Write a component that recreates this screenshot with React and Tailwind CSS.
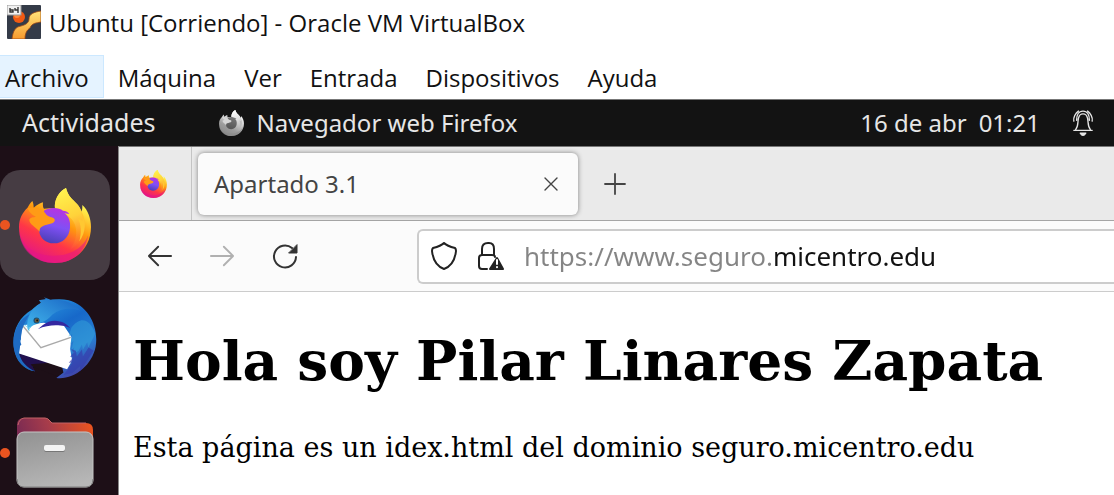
import React from "react";

function Firefox({ className, mono = false, id }) {
  const stops = mono
    ? ["#f5f5f5", "#c9c9c9", "#9c9c9c", "#8a8a8a"]
    : ["#fff44f", "#ff980e", "#ff3647", "#e31587"];
  return (
    <svg viewBox="0 0 216 225" className={className} aria-hidden="true">
      <defs>
        <linearGradient id={id + "a"} x1="0.75" y1="0.1" x2="0.3" y2="0.98">
          <stop offset="0.08" stopColor={stops[0]} />
          <stop offset="0.4" stopColor={stops[1]} />
          <stop offset="0.68" stopColor={stops[2]} />
          <stop offset="1" stopColor={stops[3]} />
        </linearGradient>
        <linearGradient id={id + "b"} x1="0.6" y1="0" x2="0.35" y2="1">
          <stop offset="0" stopColor={mono ? "#777" : "#b833e1"} />
          <stop offset="0.5" stopColor={mono ? "#666" : "#8050f5"} />
          <stop offset="1" stopColor={mono ? "#555" : "#4a3fb5"} />
        </linearGradient>
        <linearGradient id={id + "c"} x1="0.3" y1="0" x2="0.5" y2="1">
          <stop offset="0" stopColor={mono ? "#fff" : "#fff44f"} />
          <stop offset="0.5" stopColor={mono ? "#ddd" : "#ffd23a"} />
          <stop offset="1" stopColor={mono ? "#aaa" : "#ff7139"} stopOpacity="0.1" />
        </linearGradient>
      </defs>
      <path
        d="M40 39C43 44 44 53 44 59C53 51 64 45 72 43C71 52 72 58 75 62C85 60 98 60 108 62C105 34 122 9 141 0C147 25 160 33 174 48C180 55 185 64 187 72C190 66 190 59 190 51C207 66 216 92 216 117C216 180 168 225 108 225C48 225 0 180 0 118C0 91 12 72 25 60C29 53 34 45 40 39Z"
        fill={`url(#${id}a)`}
      />
      <path
        d="M1 131C12 178 51 202 99 203C153 205 195 178 208 140C199 193 160 225 108 225C48 225 4 187 1 131Z"
        fill={mono ? "#888" : "#e31587"}
        opacity="0.55"
      />
      <path
        d="M108 62C104 36 120 10 141 0C147 25 160 33 174 48C190 66 199 91 197 121C194 154 177 174 152 185C169 165 177 137 168 110C158 84 137 78 108 62Z"
        fill={`url(#${id}c)`}
      />
      <path
        d="M75 68C90 58 119 57 132 68C139 68 146 71 151 78L136 76C149 84 155 100 153 119C151 147 131 166 105 166C78 166 59 147 60 122C61 103 83 108 104 100C102 85 88 91 75 81Z"
        fill={`url(#${id}b)`}
      />
      <path
        d="M25 60C39 56 53 60 67 66C78 69 79 83 94 87C103 89 109 92 107 99C104 109 81 108 71 115C63 119 61 124 62 131C50 116 30 108 31 95C32 89 44 87 51 87C38 80 32 73 25 60Z"
        fill={mono ? "#d5d5d5" : "#ff9b16"}
      />
      <path
        d="M187 72C202 98 202 131 181 160C188 133 187 110 176 91C181 91 186 94 190 99C190 88 189 81 187 72Z"
        fill={mono ? "#bbb" : "#ffc832"}
      />
    </svg>
  );
}

function Thunderbird() {
  return (
    <svg viewBox="0 0 250 250" className="size-[84px]" aria-hidden="true">
      <defs>
        <linearGradient id="bird" x1="0.2" y1="0" x2="0.8" y2="1">
          <stop offset="0" stopColor="#2b9ee3" />
          <stop offset="0.4" stopColor="#1768c9" />
          <stop offset="0.7" stopColor="#287fd2" />
          <stop offset="1" stopColor="#4537a0" />
        </linearGradient>
        <linearGradient id="head" x1="0" y1="1" x2="1" y2="0">
          <stop offset="0" stopColor="#43b8ed" />
          <stop offset="1" stopColor="#1762c3" />
        </linearGradient>
      </defs>
      <path d="M56 38C15 60-6 111 3 155C11 195 36 217 66 221L53 205L150 225L129 241C180 248 235 204 246 148C256 88 223 25 166 10C125 0 82 13 56 38Z" fill="url(#bird)" />
      <path d="M18 168L146 207L150 225L131 236L53 205L66 221C40 215 23 197 18 168Z" fill="#1d0f17" />
      <path d="M18 168L110 196L53 200L66 221C40 215 23 197 18 168Z" fill="#21104e" />
      <path d="M28 84L18 168L161 215L176 189L170 155L174 119L150 83L90 77Z" fill="#fff" />
      <path d="M28 84L83 151L172 120" fill="none" stroke="#aaa" strokeWidth="4" />
      <path d="M88 84C120 58 159 75 170 93C156 84 110 78 74 96Z" fill="#3528a1" />
      <path d="M45 100C36 77 48 36 83 17L77 10L98 6L92 1L112 8C150 6 181 18 200 40C168 30 133 35 111 59C91 80 69 77 55 88Z" fill="url(#head)" />
      <path d="M29 81L45 92L54 88L43 105L50 100C47 91 39 83 29 81Z" fill="#81dbef" />
      <path d="M3 155C-4 108 15 67 49 51C35 75 21 103 24 128L17 124L25 141C20 143 18 156 18 168C23 191 42 211 66 221C33 218 8 190 3 155Z" fill="#1e6bc3" />
      <path d="M174 91L165 118L176 111L171 140L180 130L174 158L182 150L178 170L195 161L205 141L208 157L221 135L224 151L245 109C232 72 205 51 174 91Z" fill="#37a8dc" opacity="0.45" />
      <path d="M173 155L180 165L170 178L179 180L166 196L177 195L161 219L150 232L177 226L200 205L199 222L240 160L225 150L208 177L205 156L190 177L187 160Z" fill="#353eae" opacity="0.7" />
      <circle cx="70" cy="70" r="9" fill="#195178" />
      <circle cx="71" cy="70" r="6" fill="#76603e" />
      <circle cx="72" cy="70" r="3" fill="#111" />
    </svg>
  );
}

function Files() {
  return (
    <svg viewBox="0 0 78 72" className="h-[72px] w-[78px]" aria-hidden="true">
      <defs>
        <linearGradient id="back" x1="0" y1="0.5" x2="1" y2="0.3">
          <stop offset="0" stopColor="#772953" />
          <stop offset="0.45" stopColor="#a63c4b" />
          <stop offset="1" stopColor="#e95420" />
        </linearGradient>
        <linearGradient id="front" x1="0.3" y1="0" x2="0.6" y2="1">
          <stop offset="0" stopColor="#949494" />
          <stop offset="1" stopColor="#b7b7b7" />
        </linearGradient>
      </defs>
      <path d="M1 8Q1 1 8 1H29Q32 1 34 4L36 6H70Q77 6 77 13V40H1Z" fill="url(#back)" />
      <path d="M2 8Q3 2 8 1H29Q32 1 34 4L36 6H70" fill="none" stroke="#c16366" strokeWidth="1" />
      <rect x="1" y="15" width="76" height="55" rx="7" fill="url(#front)" stroke="#c4c4c4" />
      <path d="M1 62Q1 70 8 70H70Q77 70 77 62" fill="none" stroke="#777" />
      <rect x="28" y="30" width="21" height="5" rx="2" fill="#777" />
      <rect x="28" y="28" width="21" height="6" rx="2" fill="#f4f4f4" />
    </svg>
  );
}

function VirtualBox() {
  return (
    <svg viewBox="0 0 34 34" className="size-[34px]" aria-hidden="true">
      <defs>
        <linearGradient id="vbox" x1="0" y1="0" x2="0" y2="1">
          <stop offset="0" stopColor="#ffe37a" />
          <stop offset="1" stopColor="#f79a2e" />
        </linearGradient>
      </defs>
      <rect width="34" height="34" rx="1" fill="#343b48" />
      <circle cx="12" cy="12" r="6" fill="#f15a13" />
      <circle cx="10" cy="10" r="3" fill="#ff8a3a" />
      <path d="M34 6C27 7 22 9 22 14C22 18 18 20 14 21C8 22 6 26 5 34H18C18 28 20 25 23 23C25 18 29 18 34 17Z" fill="url(#vbox)" stroke="#9c4614" strokeWidth="0.8" />
      <rect width="14" height="10" fill="#f1f1f1" stroke="#999" />
      <path d="M3 3V7H6V5H3M8 3V5H11M11 2V8" fill="none" stroke="#333" strokeWidth="1.4" />
    </svg>
  );
}

const line = { fill: "none", stroke: "currentColor", strokeLinecap: "round", strokeLinejoin: "round" };
const menus = ["Máquina", "Ver", "Entrada", "Dispositivos", "Ayuda"];

function DockItem({ label, running, active, children }) {
  return (
    <div className="relative flex">
      <button
        aria-label={label}
        className={
          active
            ? "flex h-[110px] w-[110px] items-center justify-center rounded-[20px] bg-[#463c43]"
            : "flex h-[110px] w-[110px] items-center justify-center"
        }
      >
        {children}
      </button>
      {running && <span className="absolute top-[50px] left-0 size-2.5 rounded-full bg-[#e95420]" />}
    </div>
  );
}

export default function App() {
  return (
    <div className="flex h-screen flex-col overflow-hidden bg-white font-['Open_Sans',sans-serif] text-black">
      <header className="flex h-[55px] shrink-0 items-start gap-2 pt-[5px] pl-[7px]">
        <VirtualBox />
        <h1 className="text-[24px] leading-9 whitespace-nowrap text-[#111]">Ubuntu [Corriendo] - Oracle VM VirtualBox</h1>
      </header>
      <nav className="flex h-11 shrink-0 items-start gap-7 text-[24px] leading-[46px] whitespace-nowrap text-[#111]">
        <button className="-mr-3.5 h-[43px] border border-l-0 border-[#cce8ff] bg-[#e5f3ff] pr-3.5 pl-[5px] leading-[44px]">Archivo</button>
        {menus.map((m) => (
          <button key={m}>{m}</button>
        ))}
      </nav>

      <div className="flex h-[47px] shrink-0 items-center border-t border-[#777] bg-[#131313] pr-5 pl-[22px] font-['Noto_Sans',sans-serif] text-[24px] whitespace-nowrap text-[#e6e6e6]">
        <button className="text-[25px]">Actividades</button>
        <button className="ml-16 flex items-center gap-3">
          <Firefox id="panel" mono className="h-[26px] w-[25px]" />
          Navegador web Firefox
        </button>
        <button className="mr-8 ml-auto flex gap-3">
          <span>16 de abr</span>
          <span>01:21</span>
        </button>
        <button aria-label="Notificaciones">
          <svg viewBox="0 0 24 30" className="h-7 w-[22px]" {...line} strokeWidth="1.5" aria-hidden="true">
            <path d="M2 23H22M4 22C7 19 6 15 7 10C8 6 9 5 12 5S16 6 17 10C18 15 17 19 20 22M2 13C1 9 4 4 7 2M5 12C5 7 7 2 12 2S19 7 19 12M17 2C20 4 23 9 22 13" />
            <path d="M9 26Q12 31 15 26Z" fill="currentColor" />
          </svg>
        </button>
      </div>

      <div className="flex min-h-0 flex-1">
        <aside className="flex w-[118px] shrink-0 flex-col gap-1 overflow-hidden bg-[#1d0f17] pt-6">
          <DockItem label="Firefox" running active>
            <Firefox id="dock" className="h-[75px] w-[72px]" />
          </DockItem>
          <DockItem label="Thunderbird">
            <Thunderbird />
          </DockItem>
          <DockItem label="Archivos" running>
            <Files />
          </DockItem>
        </aside>

        <section className="flex min-w-0 flex-1 flex-col border-l border-[#888]">
          <div className="flex h-[75px] shrink-0 border-t border-b border-t-[#777] border-b-[#a5a5a5] bg-[#eaeaea] font-['Noto_Sans',sans-serif] text-[#444]">
            <button aria-label="Firefox View" className="flex w-[73px] items-center justify-center border-r border-[#c4c4c4] pr-1">
              <Firefox id="tab" className="h-7 w-[27px]" />
            </button>
            <div className="mt-1.5 ml-1.5 flex h-[62px] w-[380px] items-center justify-between rounded-md bg-[#fbfbfb] pr-5 pl-4 shadow-[0_0_5px_rgba(0,0,0,0.45)]">
              <span className="text-[24px]">Apartado 3.1</span>
              <button aria-label="Cerrar pestaña">
                <svg viewBox="0 0 14 14" className="size-3.5" {...line} strokeWidth="1.4" aria-hidden="true">
                  <path d="M1 1L13 13M13 1L1 13" />
                </svg>
              </button>
            </div>
            <button aria-label="Nueva pestaña" className="ml-[26px]">
              <svg viewBox="0 0 22 22" className="size-[22px]" {...line} strokeWidth="1.8" aria-hidden="true">
                <path d="M11 1V21M1 11H21" />
              </svg>
            </button>
          </div>

          <div className="flex h-[71px] shrink-0 items-center border-b border-[#ccc] bg-[#fbfbfb] text-[#333]">
            <div className="flex w-[298px] shrink-0 items-center gap-[38px] pl-[29px]">
              <button aria-label="Atrás">
                <svg viewBox="0 0 26 26" className="size-6" {...line} strokeWidth="2" aria-hidden="true">
                  <path d="M25 13H1M11 3L1 13L11 23" />
                </svg>
              </button>
              <button aria-label="Adelante" disabled className="text-[#b0b0b0]">
                <svg viewBox="0 0 26 26" className="size-6" {...line} strokeWidth="2" aria-hidden="true">
                  <path d="M1 13H25M15 3L25 13L15 23" />
                </svg>
              </button>
              <button aria-label="Recargar">
                <svg viewBox="0 0 26 26" className="size-[26px]" {...line} strokeWidth="2" aria-hidden="true">
                  <path d="M24 14A11 11 0 1 1 20 5" />
                  <path d="M25 2V10H17Z" fill="currentColor" strokeWidth="1" />
                </svg>
              </button>
            </div>
            <div className="flex h-[55px] min-w-0 flex-1 items-center rounded-l-md border-2 border-r-0 border-[#ccc] bg-white pl-3 text-[#222]">
              <svg viewBox="0 0 26 28" className="h-7 w-[26px] shrink-0" {...line} strokeWidth="2" aria-hidden="true">
                <path d="M13 1C10 4 6 5 2 6Q1 7 1 9C2 18 5 24 13 27C21 24 24 18 25 9Q25 7 24 6C20 5 16 4 13 1Z" />
              </svg>
              <svg viewBox="0 0 26 28" className="ml-[21px] h-7 w-[26px] shrink-0" {...line} strokeWidth="2" aria-hidden="true">
                <path d="M9 27H4Q1 27 1 24V16Q1 13 4 13H14Q17 13 17 15M4 13V7Q4 1 10 1H11Q16 1 16 7V13" />
                <path d="M19 16L25 27H12Z" fill="currentColor" />
                <path d="M19 18V22M19 25V25.2" stroke="#fff" />
              </svg>
              <input
                aria-label="Dirección"
                type="text"
                readOnly
                value="https://www.seguro.micentro.edu"
                className="ml-5 h-full min-w-0 flex-1 bg-[linear-gradient(90deg,#858585_251px,#111_251px)] bg-clip-text font-['Noto_Sans',sans-serif] text-[26px] text-transparent outline-none"
              />
            </div>
          </div>

          <main className="min-h-0 flex-1 overflow-hidden bg-white pt-[37px] pl-3.5 font-['DejaVu_Serif',serif] whitespace-nowrap">
            <h2 className="text-[55px] leading-[64px] font-bold">Hola soy Pilar Linares Zapata</h2>
            <p className="mt-[37px] text-[27px] leading-9">Esta página es un idex.html del dominio seguro.micentro.edu</p>
          </main>
        </section>
      </div>
    </div>
  );
}
